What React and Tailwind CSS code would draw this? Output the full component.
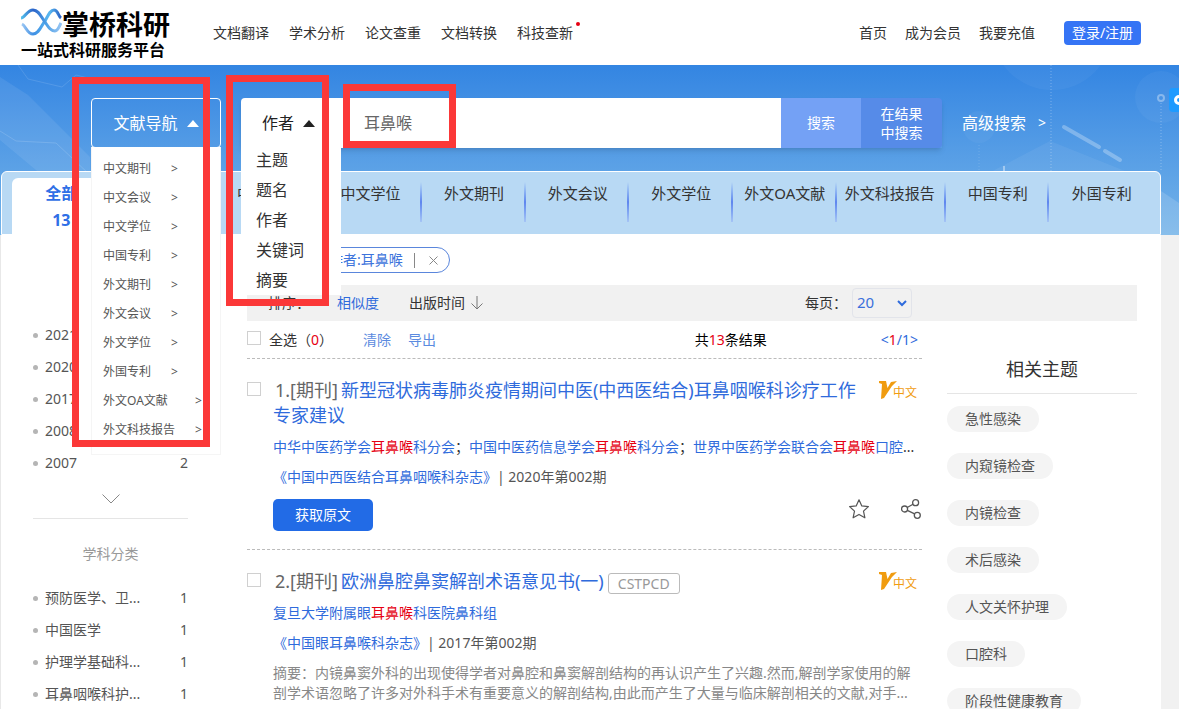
import React, { useState } from 'react';

const siteLinks = ['文档翻译', '学术分析', '论文查重', '文档转换', '科技查新'];
const userLinks = ['首页', '成为会员', '我要充值'];

const navItems = [
  '中文期刊',
  '中文会议',
  '中文学位',
  '中国专利',
  '外文期刊',
  '外文会议',
  '外文学位',
  '外国专利',
  '外文OA文献',
  '外文科技报告',
];

const fields = ['主题', '题名', '作者', '关键词', '摘要'];

const tabs = [
  '中文期刊',
  '中文会议',
  '中文学位',
  '外文期刊',
  '外文会议',
  '外文学位',
  '外文OA文献',
  '外文科技报告',
  '中国专利',
  '外国专利',
];

const years = [
  { label: '2021' },
  { label: '2020' },
  { label: '2017' },
  { label: '2008' },
  { label: '2007', count: 2 },
];

const subjects = [
  { label: '预防医学、卫...', count: 1 },
  { label: '中国医学', count: 1 },
  { label: '护理学基础科...', count: 1 },
  { label: '耳鼻咽喉科护...', count: 1 },
];

const topics = [
  '急性感染',
  '内窥镜检查',
  '内镜检查',
  '术后感染',
  '人文关怀护理',
  '口腔科',
  '阶段性健康教育',
];

const Hit = () => <em className="not-italic text-[#e60012]">耳鼻喉</em>;

const Logo = () => (
  <a href="#" className="block w-[149px] text-black">
    <span className="flex items-start">
      <svg width="41" height="28" viewBox="0 0 41 28" fill="none" className="shrink-0">
        <defs>
          <linearGradient id="waveA" x1="0" y1="0" x2="41" y2="0" gradientUnits="userSpaceOnUse">
            <stop offset="0" stopColor="#56c4ee" />
            <stop offset="0.3" stopColor="#2a62c8" />
            <stop offset="0.6" stopColor="#4a9ee6" />
            <stop offset="1" stopColor="#9cc8f4" />
          </linearGradient>
          <linearGradient id="waveB" x1="0" y1="0" x2="41" y2="0" gradientUnits="userSpaceOnUse">
            <stop offset="0" stopColor="#a5cdf5" />
            <stop offset="0.3" stopColor="#3f8fe4" />
            <stop offset="0.7" stopColor="#59b8f0" />
            <stop offset="1" stopColor="#2456c0" />
          </linearGradient>
        </defs>
        <path d="M1 16 C5 18 6 26 12 26 C18 26 20 18 24 13 C27 8 29 2 33 2 C37 2 37 8 40 10" stroke="url(#waveB)" strokeWidth="3" />
        <path d="M0 10 C4 10 6 2 12 2 C18 2 20 9 24 14 C28 20 30 23 34 23 C37 23 38 19 40 15" stroke="url(#waveA)" strokeWidth="3" />
      </svg>
      <span className="text-[27px] leading-[34px] font-bold whitespace-nowrap">掌桥科研</span>
    </span>
    <span className="block text-base leading-4 font-bold whitespace-nowrap">一站式科研服务平台</span>
  </a>
);

const HeroPattern = () => (
  <svg className="absolute inset-0 h-full w-full" viewBox="0 0 1179 170" preserveAspectRatio="xMidYMin slice" fill="none">
    <path d="M0 12 L28 30 L90 92 L90 150 L0 75 Z" fill="#fff" fillOpacity="0.08" />
    <path d="M18 0 L28 14 L62 22 L76 10 L92 14" stroke="#fff" strokeOpacity="0.12" />
    <path d="M0 66 L16 76 L56 78 L90 110" stroke="#fff" strokeOpacity="0.15" />
    <circle cx="1052" cy="-35" r="60" fill="#fff" fillOpacity="0.04" />
    <circle cx="1161" cy="32" r="26" fill="#fff" fillOpacity="0.04" />
    <circle cx="979" cy="62" r="16" fill="#fff" fillOpacity="0.04" />
    <circle cx="1161" cy="33" r="3" stroke="#fff" strokeOpacity="0.35" strokeWidth="2" />
    <path d="M1161 38 V106" stroke="#fff" strokeOpacity="0.3" strokeDasharray="1 2" />
    <path d="M1051 0 V106" stroke="#fff" strokeOpacity="0.3" strokeDasharray="1 2" />
    <path d="M979 80 V106" stroke="#fff" strokeOpacity="0.15" strokeDasharray="1 2" />
    <path d="M985 110 L1050 76 L1125 106 V170 H985 Z" fill="#fff" fillOpacity="0.06" />
    <path d="M1161 126 L1179 138 V170 H1161 Z" fill="#fff" fillOpacity="0.15" />
    <path d="M1004 101 V106" stroke="#fff" strokeOpacity="0.4" strokeWidth="2" />
    <path d="M1064 62 L1099 82 M1105 86 L1120 95" stroke="#fff" strokeOpacity="0.28" strokeWidth="4" strokeLinecap="round" />
  </svg>
);

const Caret = () => (
  <svg width="12" height="7" viewBox="0 0 12 7" fill="currentColor">
    <path d="M6 0 L12 7 H0 Z" />
  </svg>
);

const ChineseBadge = () => (
  <span className="mt-[3px] flex h-[18px] w-[43px] shrink-0 items-end text-xs leading-3 text-[#f09c10]">
    <svg width="18" height="18" viewBox="0 0 18 18" fill="currentColor">
      <path d="M0 0 H7 L8.500 7 L12 1 L18 0 L13 5 L5 17 L2 18 L3 3 L0 2 Z" />
    </svg>
    <span className="-ml-1">中文</span>
  </span>
);

const FacetList = ({ items }) => (
  <ul>
    {items.map((item) => (
      <li key={item.label} className="flex h-8 items-center text-[#555]">
        <span className="mr-[7px] size-[5px] rounded-full bg-[#b5b5b5]" />
        <a href="#">{item.label}</a>
        {item.count && <span className="ml-auto">{item.count}</span>}
      </li>
    ))}
  </ul>
);

const Result = ({ number, title, tag, children }) => (
  <article className="flex gap-3">
    <input
      type="checkbox"
      aria-label={title}
      className="mt-1 size-[14px] shrink-0 appearance-none border border-[#d0d0d0] bg-white"
    />
    <div className="min-w-0 flex-1">
      <div className="flex items-start justify-between">
        <h2 className="max-w-[594px] text-lg leading-[25px] text-[#666]">
          <span className="mr-[3px] ml-[2px]">{number}.[期刊]</span>
          <a href="#" className="text-[#2f6bdc]">{title}</a>
          {tag && (
            <span className="ml-1 inline-block rounded-[3px] border border-[#bbb] px-[9px] align-middle text-sm leading-[19px] text-[#999]">
              {tag}
            </span>
          )}
        </h2>
        <ChineseBadge />
      </div>
      {children}
    </div>
  </article>
);

const App = () => {
  const [keyword, setKeyword] = useState('耳鼻喉');
  const [pageSize, setPageSize] = useState('20');

  return (
    <div className="relative h-screen overflow-hidden bg-[#f1f1f1] font-['Noto_Sans','Noto_Sans_CJK_SC',sans-serif] text-sm text-[#333]">
      <header className="flex h-[65px] items-center bg-white pr-[38px] pl-[21px]">
        <Logo />
        <nav className="ml-[43px] flex gap-5">
          {siteLinks.map((link) => (
            <a key={link} href="#" className="relative whitespace-nowrap">
              {link}
              {link === '科技查新' && (
                <span className="absolute -top-[1px] -right-[7px] size-1 rounded-full bg-[#e60012]" />
              )}
            </a>
          ))}
        </nav>
        <nav className="ml-auto flex gap-[18px]">
          {userLinks.map((link) => (
            <a key={link} href="#" className="whitespace-nowrap">{link}</a>
          ))}
        </nav>
        <button className="ml-[29px] h-6 w-[77px] rounded bg-[#3574f5] text-white">登录/注册</button>
      </header>

      <section className="relative bg-linear-to-b from-[#3385e2] to-[#74b3e8] pt-[33px]">
        <HeroPattern />
        <div className="relative z-10 mr-[133px] ml-[91px] flex h-[50px]">
          <div className="relative mr-5 w-[130px] shrink-0">
            <button className="flex h-[50px] w-full items-center justify-center gap-[9px] rounded border border-white text-base text-white">
              文献导航
              <Caret />
            </button>
            <ul className="absolute top-[49px] left-0 h-[308px] w-full border border-t-0 border-[#f5f5f5] bg-white pt-[7px] pl-[11px] text-xs text-[#555]">
              {navItems.map((item) => (
                <li key={item}>
                  <a href="#" className="flex h-[29px] items-center gap-5 whitespace-nowrap">
                    <span className={item.length > 4 ? 'w-[72px]' : 'w-12'}>{item}</span>
                    <span>&gt;</span>
                  </a>
                </li>
              ))}
            </ul>
          </div>

          <form className="flex flex-1 shadow-md" onSubmit={(e) => e.preventDefault()}>
            <div className="relative w-[100px] shrink-0">
              <button type="button" className="flex h-full w-full items-center gap-[9px] rounded-tl bg-white pl-[21px] text-base text-[#222]">
                作者
                <Caret />
              </button>
              <ul className="absolute top-[47px] left-0 h-[150px] w-full bg-white pl-[15px] text-base">
                {fields.map((field) => (
                  <li key={field} className="flex h-[30px] items-center">
                    <a href="#">{field}</a>
                  </li>
                ))}
              </ul>
            </div>
            <input
              type="text"
              aria-label="搜索"
              value={keyword}
              onChange={(e) => setKeyword(e.target.value)}
              className="min-w-0 flex-1 bg-white pl-[23px] text-base text-[#666] outline-none"
            />
            <button className="w-20 bg-[#74a1f5] text-white">搜索</button>
            <button type="button" className="w-[81px] rounded-r bg-[#568be8] leading-[19px] text-white">
              在结果
              <br />
              中搜索
            </button>
          </form>
          <a href="#" className="ml-5 flex items-center gap-3 text-base whitespace-nowrap text-white">
            高级搜索
            <span className="text-sm">&gt;</span>
          </a>
        </div>

        <div className="relative mt-[23px] mr-[18px] ml-px flex h-16 rounded-t-md border border-white bg-[#b8d9f4] pr-2 pl-[10px] text-[15px]">
          <a
            href="#"
            className="mt-[6px] flex-[101] rounded-tl-md bg-white pt-[2px] text-center text-base leading-[27px] font-bold text-[#2f6fe6]"
          >
            全部
            <br />
            13
          </a>
          {tabs.map((tab, i) => (
            <a
              key={tab}
              href="#"
              className={`flex ${tab === '外文科技报告' ? 'flex-[112]' : 'flex-[103] pl-[3px]'} min-w-0 justify-center pt-[10px] leading-[22px] whitespace-nowrap`}
            >
              <span className="flex-1 text-center">{tab}</span>
              {i < tabs.length - 1 && (
                <span className="-mr-px h-10 w-[2px] bg-linear-to-b from-[#b8d9f4] via-[#5f86ee] to-[#a5c4f5]" />
              )}
            </a>
          ))}
        </div>

        <button aria-label="客服" className="absolute top-[23px] right-0 flex h-6 w-[10px] items-center overflow-hidden rounded-l-sm bg-[#1e9bff] pl-[5px]">
          <span className="size-[10px] shrink-0 rounded-full border-[3px] border-white" />
        </button>
      </section>

      <div className="mr-[18px] flex min-h-screen border-l border-[#e8e8e8] bg-white">
        <aside className="ml-8 w-[155px] shrink-0 pt-[84px]">
          <FacetList items={years} />
          <div className="flex h-10 items-center justify-center border-b border-[#e5e5e5]">
            <svg width="18" height="10" viewBox="0 0 18 10" fill="none" stroke="#888">
              <path d="M0.500 0.500 L9 9 L17.500 0.500" />
            </svg>
          </div>
          <h3 className="mt-6 mb-[17px] text-center leading-[22px] text-[#999]">学科分类</h3>
          <FacetList items={subjects} />
        </aside>

        <div className="mr-6 ml-[59px] min-w-0 flex-1">
          <div className="flex h-[50px] items-center pl-[69px]">
            <span className="flex h-[26px] w-[134px] items-center rounded-full border border-[#5a86dc] pl-3 whitespace-nowrap text-[#3d74dc]">
              作者:耳鼻喉
              <span className="ml-[11px] h-[15px] w-px bg-[#888]" />
              <button aria-label="删除" className="ml-[14px]">
                <svg width="9" height="9" viewBox="0 0 9 9" stroke="#888">
                  <path d="M0.500 0.500 L8.500 8.500 M8.500 0.500 L0.500 8.500" />
                </svg>
              </button>
            </span>
          </div>

          <div className="flex h-9 items-center bg-[#f1f1f1] pl-[21px]">
            <span className="w-[69px]">排序：</span>
            <a href="#" className="mr-[30px] text-[#2f6bdc]">相似度</a>
            <a href="#" className="flex items-center gap-[6px]">
              出版时间
              <svg width="12" height="14" viewBox="0 0 12 14" fill="none" stroke="#777">
                <path d="M6 0 V13 M0.500 7.500 L6 13 L11.500 7.500" />
              </svg>
            </a>
            <label htmlFor="pageSize" className="ml-auto">每页：</label>
            <span className="relative mr-[225px] ml-[5px]">
              <select
                id="pageSize"
                value={pageSize}
                onChange={(e) => setPageSize(e.target.value)}
                className="block h-[30px] w-[60px] appearance-none rounded border border-[#e2e4ea] pl-1 text-[15px] text-[#3a70dc]"
              >
                <option>20</option>
                <option>50</option>
              </select>
              <svg className="pointer-events-none absolute top-[12px] right-[5px]" width="10" height="7" viewBox="0 0 10 7" fill="none" stroke="#2f6bdc" strokeWidth="2">
                <path d="M1 1 L5 5 L9 1" />
              </svg>
            </span>
          </div>

          <div className="flex gap-[25px]">
            <main className="min-w-0 flex-1">
              <div className="flex h-[38px] items-center border-b border-dashed border-[#bbb]">
                <label className="flex items-center gap-2">
                  <input type="checkbox" className="mb-1 size-[14px] appearance-none border border-[#d0d0d0] bg-white" />
                  <span>
                    全选（<span className="text-[#e60012]">0</span>）
                  </span>
                </label>
                <a href="#" className="ml-[30px] text-[#5b8be0]">清除</a>
                <a href="#" className="ml-[17px] text-[#5b8be0]">导出</a>
                <span className="ml-auto text-black">
                  共<span className="text-[#e60012]">13</span>条结果
                </span>
                <span className="mr-1 ml-[114px] text-[#2f6bdc]">
                  &lt;<span className="text-[#e60012]">1</span>/1&gt;
                </span>
              </div>

              <div className="border-b border-dashed border-[#bbb] pt-[19px] pb-[18px]">
                <Result number={1} title="新型冠状病毒肺炎疫情期间中医(中西医结合)耳鼻咽喉科诊疗工作专家建议">
                  <p className="mt-1 truncate leading-[30px] text-[#2f6bdc]">
                    中华中医药学会<Hit />科分会<span className="text-[#333]">；</span>中国中医药信息学会<Hit />科分会
                    <span className="text-[#333]">；</span>世界中医药学会联合会<Hit />口腔<span className="text-[#333]">...</span>
                  </p>
                  <p className="leading-[30px] text-[#555]">
                    <a href="#" className="text-[#2f6bdc]">《中国中西医结合耳鼻咽喉科杂志》</a>
                    | 2020年第002期
                  </p>
                  <div className="mt-[7px] flex items-start">
                    <button className="h-8 w-[100px] rounded-[5px] bg-[#226be6] text-white">获取原文</button>
                    <button aria-label="收藏" className="mr-8 ml-auto">
                      <svg width="20" height="20" viewBox="0 0 20 20" fill="none" stroke="#555" strokeWidth="1.200" strokeLinejoin="round">
                        <path d="M10 0.800 L12.800 6.900 L19.400 7.600 L14.500 12.100 L15.900 18.800 L10 15.400 L4.100 18.800 L5.500 12.100 L0.600 7.600 L7.200 6.900 Z" />
                      </svg>
                    </button>
                    <button aria-label="分享" className="mr-px">
                      <svg width="20" height="20" viewBox="0 0 20 20" fill="none" stroke="#555" strokeWidth="1.300">
                        <circle cx="3.600" cy="10" r="3" />
                        <circle cx="14.600" cy="3.700" r="3" />
                        <circle cx="16.300" cy="16.300" r="3" />
                        <path d="M6.200 8.500 L12 5.200 M6.300 11.300 L13.600 14.900" />
                      </svg>
                    </button>
                  </div>
                </Result>
              </div>

              <div className="pt-[19px]">
                <Result number={2} title="欧洲鼻腔鼻窦解剖术语意见书(一)" tag="CSTPCD">
                  <p className="mt-1 truncate leading-[30px] text-[#2f6bdc]">
                    复旦大学附属眼<Hit />科医院鼻科组
                  </p>
                  <p className="leading-[30px] text-[#555]">
                    <a href="#" className="text-[#2f6bdc]">《中国眼耳鼻喉科杂志》</a>
                    | 2017年第002期
                  </p>
                  <p className="mt-[5px] mr-2 leading-5 text-[#888]">
                    摘要：内镜鼻窦外科的出现使得学者对鼻腔和鼻窦解剖结构的再认识产生了兴趣.然而,解剖学家使用的解剖学术语忽略了许多对外科手术有重要意义的解剖结构,由此而产生了大量与临床解剖相关的文献,对手...
                  </p>
                </Result>
              </div>
            </main>

            <aside className="w-[190px] shrink-0">
              <h3 className="border-b border-[#e5e5e5] pt-[34px] pb-[10px] text-center text-lg text-[#333]">相关主题</h3>
              <ul className="mt-3 flex flex-col items-start gap-[21px]">
                {topics.map((topic) => (
                  <li key={topic}>
                    <a href="#" className="block rounded-full bg-[#f4f4f4] px-[18px] leading-[26px] text-[#555]">{topic}</a>
                  </li>
                ))}
              </ul>
            </aside>
          </div>
        </div>
      </div>

      {/* highlight frames */}
      <div className="pointer-events-none absolute top-[77px] left-[72px] z-20 h-[370px] w-[138px] border-[7px] border-[#fb3838]" />
      <div className="pointer-events-none absolute top-[75px] left-[226px] z-20 h-[231px] w-[103px] border-[7px] border-[#fb3838]" />
      <div className="pointer-events-none absolute top-[84px] left-[343px] z-20 h-[64px] w-[113px] border-[7px] border-[#fb3838]" />
    </div>
  );
};

export default App;
